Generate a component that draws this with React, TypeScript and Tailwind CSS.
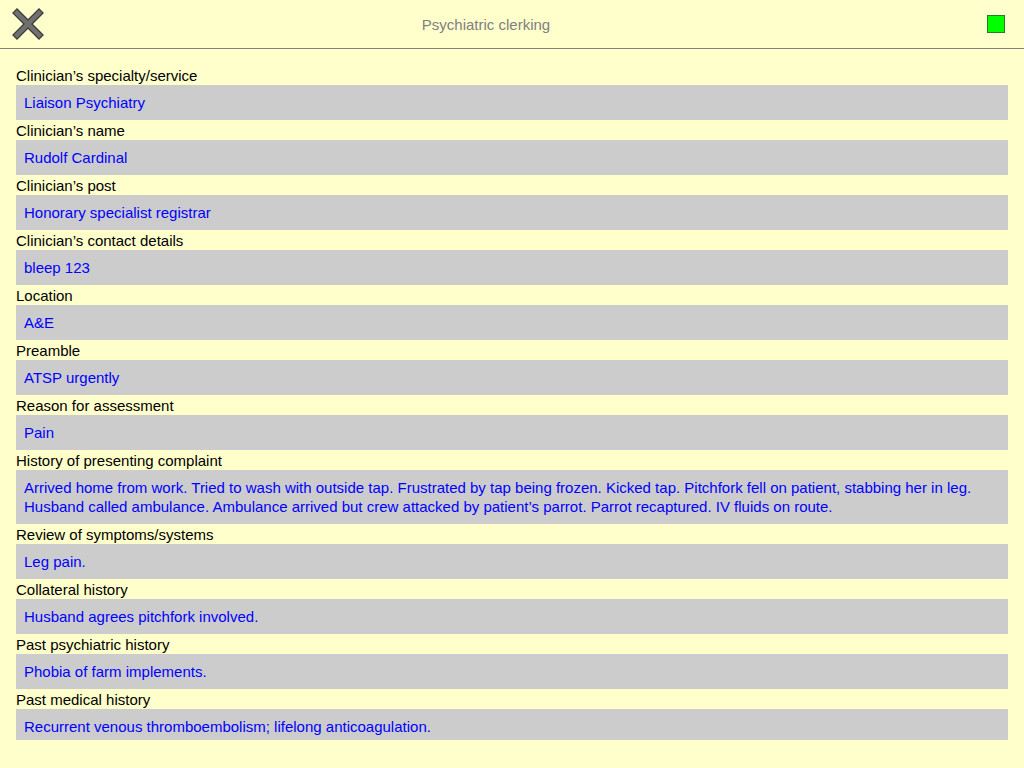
import React from "react";

const fields: { label: string; value: string }[] = [
  { label: "Clinician’s specialty/service", value: "Liaison Psychiatry" },
  { label: "Clinician’s name", value: "Rudolf Cardinal" },
  { label: "Clinician’s post", value: "Honorary specialist registrar" },
  { label: "Clinician’s contact details", value: "bleep 123" },
  { label: "Location", value: "A&E" },
  { label: "Preamble", value: "ATSP urgently" },
  { label: "Reason for assessment", value: "Pain" },
  {
    label: "History of presenting complaint",
    value:
      "Arrived home from work. Tried to wash with outside tap. Frustrated by tap being frozen. Kicked tap. Pitchfork fell on patient, stabbing her in leg. Husband called ambulance. Ambulance arrived but crew attacked by patient’s parrot. Parrot recaptured. IV fluids on route.",
  },
  { label: "Review of symptoms/systems", value: "Leg pain." },
  { label: "Collateral history", value: "Husband agrees pitchfork involved." },
  { label: "Past psychiatric history", value: "Phobia of farm implements." },
  {
    label: "Past medical history",
    value: "Recurrent venous thromboembolism; lifelong anticoagulation.",
  },
];

function CloseIcon() {
  return (
    <svg width="32" height="32" viewBox="0 0 32 32">
      <path
        d="M5 5 L27 27 M27 5 L5 27"
        stroke="#3a3a3a"
        strokeWidth="7"
        strokeLinecap="square"
      />
      <path
        d="M5 5 L27 27 M27 5 L5 27"
        stroke="#707070"
        strokeWidth="4.5"
        strokeLinecap="square"
      />
    </svg>
  );
}

export default function App() {
  return (
    <div
      className="w-[1024px] h-[768px] bg-[#ffffcc] overflow-hidden flex flex-col"
      style={{ fontFamily: '"Liberation Sans", Arial, sans-serif' }}
    >
      {/* header */}
      <header className="h-[49px] flex items-center border-b border-[#808080] shrink-0">
        <div className="w-[60px] pl-[12px] flex items-center">
          <CloseIcon />
        </div>
        <div className="flex-1 text-center text-[15px] text-[#808080] pr-[52px] pt-[2px]">
          Psychiatric clerking
        </div>
        <div className="w-[60px] flex justify-end pr-[19px]">
          <div className="w-[18px] h-[18px] bg-[#00ff00] border border-[#2a7a2a]" />
        </div>
      </header>

      {/* fields */}
      <main className="h-[691px] overflow-hidden px-4 pt-[16px]">
        {fields.map((f) => (
          <div key={f.label}>
            <div className="h-[20px] leading-[22px] text-[15px] text-black">
              {f.label}
            </div>
            <div className="bg-[#cccccc] px-2 py-[8px] text-[15px] leading-[19px] text-[#0000ff]">
              {f.value}
            </div>
          </div>
        ))}
      </main>
    </div>
  );
}
